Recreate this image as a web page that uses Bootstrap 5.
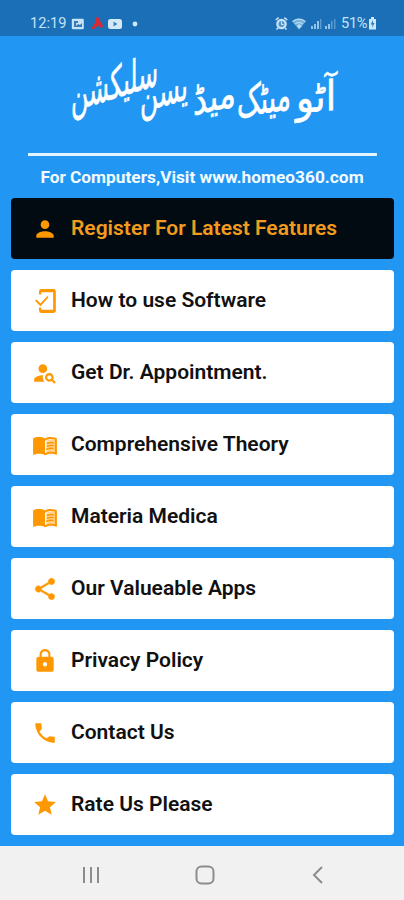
<!DOCTYPE html>
<html lang="en">
<head>
<meta charset="utf-8">
<meta name="viewport" content="width=device-width, initial-scale=1">
<title>Homeo360</title>
<link href="https://cdn.jsdelivr.net/npm/bootstrap@5.3.0/dist/css/bootstrap.min.css" rel="stylesheet">
<style>
body{font-family:Roboto,"Liberation Sans",sans-serif;background:#2196f3;height:900px;overflow:hidden}
svg{display:block;flex:none}
.status{height:36px;background:#1a6fb7;color:#c5e2f8;padding:11px 27px 0 30px;font-size:14.6px;line-height:25px}
.clock{width:37px}
.battery{letter-spacing:-.4px;margin-left:5px}
.brand{height:117px;padding:4px 68px 0 70px;color:#fff;line-height:1}
.brand svg{overflow:visible}
.rule{height:3px;margin:0 27px 0 28px;background:#e3f6ff}
.visit{height:42px;line-height:42px;font-size:17.3px;font-weight:700;color:#f2fbff}
.menu{padding:0 10px 0 11px;gap:11px}
.tile{height:61px;border-radius:4px;background:#fff;color:#111;font-size:21px;font-weight:600;padding-left:21px;text-decoration:none}
.tile span{padding-top:1px}
.tile svg{width:26px;height:26px;fill:#ff9800;margin-right:13px}
.tile.dark{background:#020a12;color:#f29c1f}
.keys{height:54px;background:#f1f1f2;padding:3px 76px 0 81px}
.keys svg{fill:none;stroke:#8c8c8e;stroke-width:2}
</style>
</head>
<body class="d-flex flex-column">
<div class="status d-flex align-items-center flex-shrink-0 pb-0">
  <span class="clock">12:19</span>
  <svg class="ms-1" width="14" height="12" viewBox="0 0 14 12"><rect x=".8" y=".8" width="12" height="10.4" rx="1" fill="#c5e2f8"/><path d="M3 3h4v2H5v3l2-2 2 1 2-2v4H3z" fill="#3679b5"/></svg>
  <svg width="15" height="13" viewBox="0 0 15 13" style="margin-left:5px"><path d="M5 .5 8 0l5 9-1.500 2.500L8 8.500l-4 3.500H1L5 6z" fill="#d72a35"/></svg>
  <svg width="14" height="12" viewBox="0 0 14 12" style="margin-left:3px"><rect y="1" width="14" height="10" rx="2.5" fill="#d3e9f9"/><path d="m5.5 3.5 4 2.5-4 2.5z" fill="#3d84bf"/></svg>
  <svg width="6" height="6" viewBox="0 0 6 6" style="margin-left:10px"><circle cx="3" cy="3" r="2.4" fill="#cfe9fa"/></svg>
  <svg class="ms-auto" width="13" height="13" viewBox="0 0 13 13"><circle cx="6.5" cy="7" r="5.3" fill="#c5e2f8"/><path d="m.7 3 3-2.4M12.3 3l-3-2.4M3 11l-1.5 1.5M10 11l1.5 1.5" stroke="#c5e2f8" stroke-width="1.6"/><circle cx="6.5" cy="7" r="3" fill="#5291c5"/><path d="M6.5 4.5v3h2" fill="none" stroke="#d8edff"/></svg>
  <svg width="15" height="12" viewBox="0 0 15 12" style="margin-left:4px"><path d="M0 3.2Q7 -2 14 3.2L7 11.5z" fill="#6faedb"/><path d="M.7 3.5Q7-1 13.3 3.5M3 6q4-3 8 0" fill="none" stroke="#b0d6f0" stroke-width="1.3"/><path d="m7 6 3 2-3 3-2-3z" fill="#b9dcf4"/></svg>
  <svg width="12" height="12" viewBox="0 0 12 12" style="margin-left:3px"><path d="M1 8h2v3H1zM4 6h2v5H4zM7 3h2v8H7z" fill="#93c3e8"/><path d="M10 1h1.4v10H10z" fill="#5b9dd1"/></svg>
  <svg width="12" height="12" viewBox="0 0 12 12" style="margin-left:2px"><path d="M1 8h2v3H1zM4 6h2v5H4z" fill="#93c3e8"/><path d="M7 3h1.5v8H7zM10 1h1.4v10H10z" fill="#5b9dd1"/></svg>
  <span class="battery">51%</span>
  <svg width="9" height="13" viewBox="0 0 9 13" style="margin-left:1px"><path d="M3 0h3v2h2v10.5H1V2h2z" fill="#cee7fa"/><path d="M5 3 2.7 7.5h1.8L4 11l2.6-5H5z" fill="#347bb4"/></svg>
</div>

<header class="brand flex-shrink-0">
  <svg width="266" height="100" viewBox="0 0 266 100" fill="#fff" stroke="#fff" stroke-width=".5" role="img" direction="rtl" lang="ur" font-family="DejaVu Sans" font-size="32">
    <text transform="translate(266 70) skewY(-4) scale(1 1.3)" textLength="40" lengthAdjust="spacingAndGlyphs">آٹو</text>
    <text transform="translate(221 69) skewY(-9) scale(1 1.35)" textLength="54" lengthAdjust="spacingAndGlyphs">میٹک</text>
    <text transform="translate(166 66) skewY(-12) scale(1 1.25)" textLength="43" lengthAdjust="spacingAndGlyphs">میڈ</text>
    <text transform="translate(118 59) skewY(-16) scale(1 1.35)" textLength="48" lengthAdjust="spacingAndGlyphs">یسن</text>
    <text transform="translate(88 45) skewY(-17) scale(1 1.4)" textLength="87" lengthAdjust="spacingAndGlyphs">سلیکشن</text>
  </svg>
</header>
<div class="rule flex-shrink-0"></div>
<div class="visit text-center flex-shrink-0">For Computers,Visit www.homeo360.com</div>

<nav class="menu d-flex flex-column flex-shrink-0">
  <a class="tile dark d-flex align-items-center"><svg viewBox="0 0 24 24"><path d="M12 12a4 4 0 1 0 0-8 4 4 0 0 0 0 8zm0 2c-2.670 0-8 1.340-8 4v2h16v-2c0-2.660-5.330-4-8-4z"/></svg><span>Register For Latest Features</span></a>
  <a class="tile d-flex align-items-center"><svg viewBox="0 0 24 24"><path d="M20 1H8.500a2 2 0 0 0-2 2v3h2V4h11v16h-11v-2h-2v3a2 2 0 0 0 2 2H20a2 2 0 0 0 2-2V3a2 2 0 0 0-2-2z"/><path d="M7.500 16.200 3.800 12.500l-1.300 1.300 5 5L15 10.500l-1.200-1.200z" transform="translate(.3 -2)"/></svg><span>How to use Software</span></a>
  <a class="tile d-flex align-items-center"><svg viewBox="0 0 24 24"><circle cx="10" cy="8" r="4"/><path d="M10.35 14.01C7.62 13.91 2 15.27 2 18v2h9.54c-2.47-2.76-1.23-5.89-1.19-5.99zM19.43 18.02c.36-.59.57-1.28.57-2.02 0-2.21-1.79-4-4-4s-4 1.79-4 4 1.79 4 4 4c.74 0 1.43-.22 2.02-.57L20.59 22 22 20.59l-2.57-2.57zM16 18c-1.1 0-2-.9-2-2s.9-2 2-2 2 .9 2 2-.9 2-2 2z"/></svg><span>Get Dr. Appointment.</span></a>
  <a class="tile d-flex align-items-center"><svg viewBox="0 0 24 24"><path d="M13.500 7.500Q17 6 21.500 7v11.500q-4-1-8 1z" fill="#ffd699"/><path d="M21 5c-1.11-.35-2.33-.5-3.5-.5-1.95 0-4.05.4-5.5 1.5-1.45-1.1-3.55-1.5-5.5-1.5S2.45 4.9 1 6v14.65c0 .25.25.5.5.5.1 0 .15-.05.25-.05C3.1 20.45 5.05 20 6.5 20c1.95 0 4.05.4 5.5 1.5 1.35-.85 3.8-1.5 5.5-1.5 1.65 0 3.35.3 4.75 1.05.1.05.15.05.25.05.25 0 .5-.25.5-.5V6c-.6-.45-1.25-.75-2-1zm0 13.5c-1.1-.35-2.3-.5-3.5-.5-1.7 0-4.15.65-5.5 1.5V8c1.35-.85 3.8-1.5 5.5-1.5 1.2 0 2.4.15 3.5.5v11.5z"/><path d="M17.5 10.5c.88 0 1.73.09 2.5.26V9.24c-2.2-.45-4.72-.2-6.5.59v1.66c1.13-.64 2.7-.99 4-.99zM13.5 12.49v1.66c1.85-1 4.25-1.2 6.5-.73V11.9c-2.2-.45-4.72-.2-6.5.59zM17.5 14.33c-1.7 0-3.24.29-4.5.83v1.66c1.85-1 4.75-1.2 7-.73v-1.52c-.79-.16-1.64-.24-2.5-.24z"/></svg><span>Comprehensive Theory</span></a>
  <a class="tile d-flex align-items-center"><svg viewBox="0 0 24 24"><path d="M13.500 7.500Q17 6 21.500 7v11.500q-4-1-8 1z" fill="#ffd699"/><path d="M21 5c-1.11-.35-2.33-.5-3.5-.5-1.95 0-4.05.4-5.5 1.5-1.45-1.1-3.55-1.5-5.5-1.5S2.45 4.9 1 6v14.65c0 .25.25.5.5.5.1 0 .15-.05.25-.05C3.1 20.45 5.05 20 6.5 20c1.95 0 4.05.4 5.5 1.5 1.35-.85 3.8-1.5 5.5-1.5 1.65 0 3.35.3 4.75 1.05.1.05.15.05.25.05.25 0 .5-.25.5-.5V6c-.6-.45-1.25-.75-2-1zm0 13.5c-1.1-.35-2.3-.5-3.5-.5-1.7 0-4.15.65-5.5 1.5V8c1.35-.85 3.8-1.5 5.5-1.5 1.2 0 2.4.15 3.5.5v11.5z"/><path d="M17.5 10.5c.88 0 1.73.09 2.5.26V9.24c-2.2-.45-4.72-.2-6.5.59v1.66c1.13-.64 2.7-.99 4-.99zM13.5 12.49v1.66c1.85-1 4.25-1.2 6.5-.73V11.9c-2.2-.45-4.72-.2-6.5.59zM17.5 14.33c-1.7 0-3.24.29-4.5.83v1.66c1.85-1 4.75-1.2 7-.73v-1.52c-.79-.16-1.64-.24-2.5-.24z"/></svg><span>Materia Medica</span></a>
  <a class="tile d-flex align-items-center"><svg viewBox="0 0 24 24"><path d="M18 16.08c-.76 0-1.44.3-1.96.77L8.91 12.7c.05-.23.09-.46.09-.7s-.04-.47-.09-.7l7.05-4.11c.54.5 1.25.81 2.04.81 1.66 0 3-1.34 3-3s-1.34-3-3-3-3 1.34-3 3c0 .24.04.47.09.7L8.04 9.81C7.5 9.31 6.79 9 6 9c-1.66 0-3 1.34-3 3s1.34 3 3 3c.79 0 1.5-.31 2.04-.81l7.12 4.16c-.05.21-.08.43-.08.65 0 1.61 1.31 2.92 2.92 2.92s2.92-1.31 2.92-2.92-1.31-2.92-2.92-2.92z" stroke="#ff9800" stroke-width=".4"/></svg><span>Our Valueable Apps</span></a>
  <a class="tile d-flex align-items-center"><svg viewBox="0 0 24 24"><path d="M18 8h-1V6c0-2.76-2.24-5-5-5S7 3.24 7 6v2H6c-1.1 0-2 .9-2 2v10c0 1.1.9 2 2 2h12c1.1 0 2-.9 2-2V10c0-1.1-.9-2-2-2zm-6 9c-1.1 0-2-.9-2-2s.9-2 2-2 2 .9 2 2-.9 2-2 2zm3.1-9H8.900V6c0-1.710 1.390-3.100 3.100-3.100s3.100 1.390 3.100 3.100v2z"/></svg><span>Privacy Policy</span></a>
  <a class="tile d-flex align-items-center"><svg viewBox="0 0 24 24"><path d="m20 15.500-3.600-.6-3 2c-2.800-1.400-5-3.600-6.500-6.300l2.200-2.200L8.500 3H3c0 9.400 7.600 18 18 18v-5.500z"/></svg><span>Contact Us</span></a>
  <a class="tile d-flex align-items-center"><svg viewBox="0 0 24 24"><path d="M12 17.27 18.18 21l-1.64-7.03L22 9.24l-7.19-.61L12 2 9.190 8.630 2 9.240l5.460 4.730L5.820 21z"/></svg><span>Rate Us Please</span></a>
</nav>

<footer class="keys d-flex align-items-center justify-content-between mt-auto flex-shrink-0">
  <svg width="20" height="20" viewBox="0 0 20 20"><path d="M3 2v16M10 2v16M17 2v16"/></svg>
  <svg width="20" height="20" viewBox="0 0 20 20"><rect x="1.500" y="1.500" width="17" height="17" rx="5"/></svg>
  <svg width="20" height="20" viewBox="0 0 20 20"><path d="M14 2 6 10l8 8"/></svg>
</footer>
<script src="https://cdn.jsdelivr.net/npm/bootstrap@5.3.0/dist/js/bootstrap.bundle.min.js"></script>
</body>
</html>
